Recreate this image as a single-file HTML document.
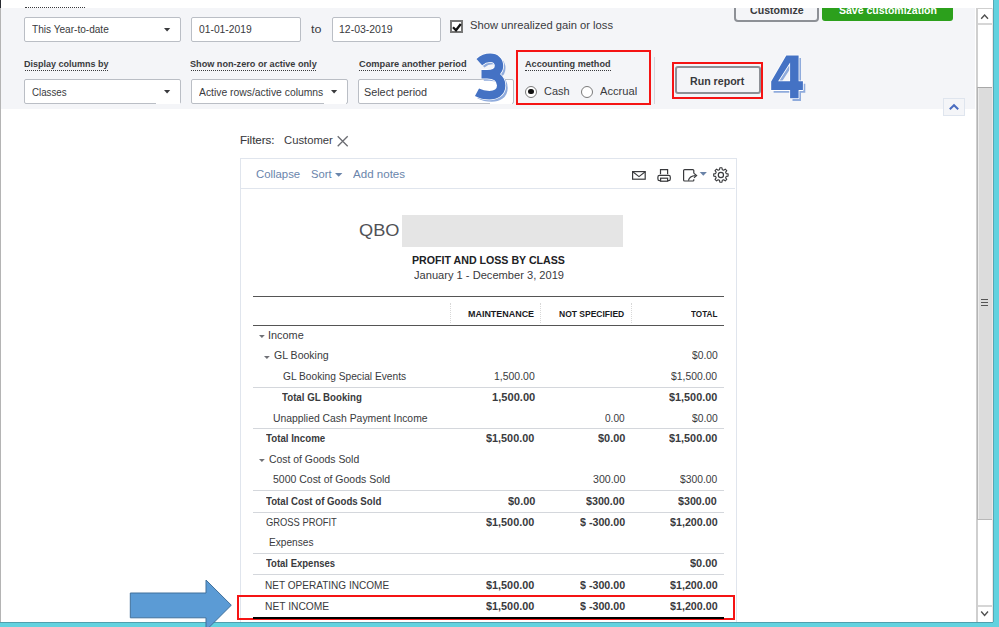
<!DOCTYPE html>
<html><head><meta charset="utf-8"><style>
html,body{margin:0;padding:0;}
body{width:999px;height:627px;overflow:hidden;position:relative;background:#fff;font-family:"Liberation Sans",sans-serif;}
.t{position:absolute;white-space:nowrap;line-height:20px;transform-origin:0 0;font-family:"Liberation Sans",sans-serif;}
.box{position:absolute;box-sizing:content-box;}
.inp{border:1px solid #babec5;border-radius:2px;background:#fff;}
.tri{position:absolute;width:0;height:0;border-style:solid;border-width:3.4px 3px 0 3px;border-color:#393a3d transparent transparent transparent;}
.tri2{position:absolute;width:0;height:0;border-style:solid;border-width:3.2px 2.9px 0 2.9px;border-color:#6b6c72 transparent transparent transparent;}
.dot{position:absolute;height:0;border-top:1px dotted #393a3d;}
.hl{position:absolute;left:253px;width:471px;height:1px;background:#d4d7dc;}
.vd{position:absolute;top:303px;height:20px;width:0;border-left:1px dotted #d8d8d8;}
</style></head><body>

<div style="position:absolute;left:0;top:0;width:1px;height:627px;background:#b4b4b4"></div>
<div style="position:absolute;left:1px;top:8px;width:974px;height:101px;background:#f4f5f8"></div>
<!-- top buttons -->
<div class="box" style="left:733.5px;top:-6px;width:81.5px;height:23.5px;background:#f4f5f8;border:2px solid #8d9096;border-radius:4px"></div>
<div class="box" style="left:822px;top:-6px;width:131px;height:27px;background:#2ca01c;border-radius:3px"></div>
<!-- row 1 inputs -->
<div class="box inp" style="left:24px;top:17px;width:155px;height:23px"></div>
<svg class="box" style="left:163px;top:27.4px" width="8.2" height="5.4"><path d="M1,1 H7.2 L4.1,4.4 Z" fill="#393a3d"/></svg>
<div class="box inp" style="left:191px;top:17px;width:108px;height:23px"></div>
<div class="box inp" style="left:332px;top:17px;width:107px;height:23px"></div>
<div class="box" style="left:450px;top:20.2px;width:9px;height:8.8px;border:2px solid #767676;background:#fff"></div>
<svg class="box" style="left:450px;top:20px" width="14" height="14" viewBox="0 0 14 14"><path d="M3,7.3 L6,10.3 L10.8,4" fill="none" stroke="#111" stroke-width="2.3"/></svg>
<!-- labels underline -->
<div class="dot" style="left:25px;top:70px;width:83px"></div>
<div class="dot" style="left:191px;top:70px;width:125px"></div>
<div class="dot" style="left:358.5px;top:70px;width:107px"></div>
<div class="dot" style="left:525px;top:70px;width:85.5px"></div>
<!-- row 2 inputs -->
<div class="box inp" style="left:24px;top:79px;width:155px;height:23px"></div>
<svg class="box" style="left:163px;top:89px" width="8.2" height="5.4"><path d="M1,1 H7.2 L4.1,4.4 Z" fill="#393a3d"/></svg>
<div style="position:absolute;left:156px;top:101px;width:23.5px;height:3px;background:#fff"></div>
<div class="box inp" style="left:191px;top:79px;width:155px;height:23px"></div>
<svg class="box" style="left:330px;top:89px" width="8.2" height="5.4"><path d="M1,1 H7.2 L4.1,4.4 Z" fill="#393a3d"/></svg>
<div style="position:absolute;left:323.5px;top:101px;width:22.5px;height:3px;background:#fff"></div>
<div class="box inp" style="left:358px;top:79px;width:154px;height:23px"></div>
<div style="position:absolute;left:490px;top:101px;width:21.5px;height:3px;background:#fff"></div>
<svg class="box" style="left:460px;top:45px" width="60" height="65" viewBox="460 45 60 65">
 <g fill="none" stroke-linejoin="round">
 <path id="p3" d="M479.3,62.2 C482.6,59.2 486,57.8 490.2,57.8 C495.6,57.8 499,61 499,65.8 C499,71.2 494.6,74.3 487,74.3 H481.5 M487,74.3 C495.6,74.3 501.2,78.6 501.2,85.6 C501.2,92.6 495.6,95.2 489.4,95.2 C485,95.2 481,94.4 477,92.2" stroke="#8fabdc" stroke-width="8.4" transform="translate(2.3,2.3)"/>
 <path d="M479.3,62.2 C482.6,59.2 486,57.8 490.2,57.8 C495.6,57.8 499,61 499,65.8 C499,71.2 494.6,74.3 487,74.3 H481.5 M487,74.3 C495.6,74.3 501.2,78.6 501.2,85.6 C501.2,92.6 495.6,95.2 489.4,95.2 C485,95.2 481,94.4 477,92.2" stroke="#fff" stroke-width="10"/>
 <path d="M479.3,62.2 C482.6,59.2 486,57.8 490.2,57.8 C495.6,57.8 499,61 499,65.8 C499,71.2 494.6,74.3 487,74.3 H481.5 M487,74.3 C495.6,74.3 501.2,78.6 501.2,85.6 C501.2,92.6 495.6,95.2 489.4,95.2 C485,95.2 481,94.4 477,92.2" stroke="#4472c4" stroke-width="8.4"/>
 </g>
</svg>
<svg class="box" style="left:760px;top:45px" width="55" height="65" viewBox="760 45 55 65">
 <path d="M786.3,55.5 H798.6 V81.2 H802.9 V90.1 H798.6 V98.3 H790.1 V90.1 H771.2 V81.6 Z M790.1,62.6 L778.1,81.2 H790.1 Z" fill="#8fabdc" fill-rule="evenodd" transform="translate(2.4,2.6)"/>
 <path d="M786.3,55.5 H798.6 V81.2 H802.9 V90.1 H798.6 V98.3 H790.1 V90.1 H771.2 V81.6 Z M790.1,62.6 L778.1,81.2 H790.1 Z" fill="#4472c4" fill-rule="evenodd" stroke="#fff" stroke-width="1.6" stroke-linejoin="round"/>
 <path d="M786.3,55.5 H798.6 V81.2 H802.9 V90.1 H798.6 V98.3 H790.1 V90.1 H771.2 V81.6 Z M790.1,62.6 L778.1,81.2 H790.1 Z" fill="#4472c4" fill-rule="evenodd"/>
</svg>
<!-- accounting method -->
<div class="box" style="left:515.6px;top:50.2px;width:131.8px;height:51px;border:2px solid #f51414"></div>
<div class="box" style="left:525px;top:85.6px;width:10px;height:10px;border:1px solid #7a7a7a;border-radius:50%;background:#fff"></div>
<div class="box" style="left:528.4px;top:89px;width:5.4px;height:5.4px;border-radius:50%;background:#111"></div>
<div class="box" style="left:581px;top:85.6px;width:10px;height:10px;border:1px solid #7a7a7a;border-radius:50%;background:#fff"></div>
<div style="position:absolute;left:654.3px;top:57px;width:1px;height:47px;background:#d4d7dc"></div>
<!-- run report -->
<div class="box" style="left:671.9px;top:61.6px;width:87.6px;height:33.1px;border:2px solid #f51414"></div>
<div class="box" style="left:675px;top:66.4px;width:81.7px;height:23.6px;border:2px solid #8d9096;border-radius:3px;background:#f4f5f8"></div>
<!-- collapse chevron -->
<div class="box" style="left:943.3px;top:98.2px;width:19.4px;height:15.4px;border:1px solid #dfe5ee;background:#f4f5f8"></div>
<svg class="box" style="left:943px;top:98px" width="22" height="18"><path d="M6.8,11.2 L11,7.2 L15.2,11.2" fill="none" stroke="#4a6cc0" stroke-width="2"/></svg>
<!-- scrollbar -->
<div style="position:absolute;left:976px;top:8px;width:17px;height:614px;background:#fff"></div>
<div style="position:absolute;left:976.3px;top:8px;width:1.4px;height:614px;background:#cfcfcf"></div>
<div style="position:absolute;left:976px;top:8px;width:17px;height:1px;background:#cfcfcf"></div>
<div style="position:absolute;left:977.5px;top:23.4px;width:15.5px;height:1.5px;background:#d6d6d6"></div>
<div style="position:absolute;left:976.5px;top:87px;width:16px;height:433px;background:#dcdcdc;border-top:1px solid #a8a8a8;border-bottom:1.5px solid #b8b8b8;border-left:1.5px solid #b4b4b4;box-sizing:border-box;box-shadow:inset 1px 0 0 #ebebeb,inset -1px 0 0 #e6e6e6"></div>
<div style="position:absolute;left:977.5px;top:605.2px;width:15.5px;height:1.5px;background:#d6d6d6"></div>
<svg class="box" style="left:976px;top:8px" width="17" height="16"><path d="M5.2,10.8 L8.6,7 L12,10.8" fill="none" stroke="#505050" stroke-width="1.4"/></svg>
<svg class="box" style="left:976px;top:606px" width="17" height="16"><path d="M5.2,5.5 L8.6,9.4 L12,5.5" fill="none" stroke="#505050" stroke-width="1.4"/></svg>
<div style="position:absolute;left:981.3px;top:299.2px;width:7px;height:1.3px;background:#555;box-shadow:0 3px 0 #555,0 6px 0 #555"></div>
<!-- filters -->
<svg class="box" style="left:336px;top:135px" width="14" height="13"><path d="M1.7,1.2 L11.7,11.2 M11.7,1.2 L1.7,11.2" fill="none" stroke="#6b6c72" stroke-width="1.3"/></svg>
<!-- report container -->
<div class="box" style="left:240.4px;top:158.3px;width:494.6px;height:480px;border:1px solid #e0e5ed;background:#fff"></div>
<div style="position:absolute;left:241px;top:187.5px;width:494px;height:1px;background:#e0e5ed"></div>
<svg class="box" style="left:334px;top:171.8px" width="10" height="7"><path d="M1,1 H8.4 L4.7,4.8 Z" fill="#6a85ab"/></svg>
<svg class="box" style="left:620px;top:160px" width="120" height="28" viewBox="620 160 120 28">
 <rect x="632.6" y="171.6" width="12.6" height="7.6" fill="none" stroke="#393a3d" stroke-width="1.2"/>
 <path d="M632.8,171.8 L639,176.6 L645.2,171.8" fill="none" stroke="#393a3d" stroke-width="1.1"/>
 <path d="M660.5,174.2 V169.6 H667.6 V174.2" fill="none" stroke="#393a3d" stroke-width="1.2"/>
 <rect x="657.9" y="175.3" width="12.4" height="5.4" rx="1.6" fill="none" stroke="#393a3d" stroke-width="1.2"/>
 <rect x="660.6" y="178.2" width="7" height="3" fill="#fff" stroke="#393a3d" stroke-width="1.2"/>
 <path d="M693.8,173.4 V170.6 Q693.8,169.6 692.8,169.6 H684.6 Q683.6,169.6 683.6,170.6 V180 Q683.6,181 684.6,181 H693 Q693.8,181 693.8,180.2 V179.2" fill="none" stroke="#393a3d" stroke-width="1.2"/>
 <path d="M688.4,180.6 Q689.4,175.8 695.6,175.6" fill="none" stroke="#393a3d" stroke-width="1.2"/>
 <path d="M694,173.4 L696.6,175.6 L694,177.8" fill="none" stroke="#393a3d" stroke-width="1.2"/>
 <path d="M699.7,172 H706.9 L703.3,175.8 Z" fill="#6a83a8"/>
 <path d="M719.53,169.67 L719.81,167.78 L721.99,167.78 L722.27,169.67 L723.70,170.27 L725.24,169.13 L726.77,170.66 L725.63,172.20 L726.23,173.63 L728.12,173.91 L728.12,176.09 L726.23,176.37 L725.63,177.80 L726.77,179.34 L725.24,180.87 L723.70,179.73 L722.27,180.33 L721.99,182.22 L719.81,182.22 L719.53,180.33 L718.10,179.73 L716.56,180.87 L715.03,179.34 L716.17,177.80 L715.57,176.37 L713.68,176.09 L713.68,173.91 L715.57,173.63 L716.17,172.20 L715.03,170.66 L716.56,169.13 L718.10,170.27 Z" fill="none" stroke="#393a3d" stroke-width="1.1" stroke-linejoin="round"/>
 <circle cx="720.9" cy="175" r="2.6" fill="none" stroke="#393a3d" stroke-width="1.2"/>
</svg>
<div style="position:absolute;left:402.2px;top:215px;width:220.7px;height:32px;background:#e5e5e5"></div>
<!-- table lines -->
<div class="hl" style="top:296px;background:#555;"></div>
<div class="hl" style="top:325px;background:#555;"></div>
<div class="vd" style="left:449.6px"></div>
<div class="vd" style="left:540.2px"></div>
<div class="vd" style="left:631px"></div>
<div class="hl" style="top:387px"></div>
<div class="hl" style="top:427.5px"></div>
<div class="hl" style="top:490px"></div>
<div class="hl" style="top:512px"></div>
<div class="hl" style="top:552.6px"></div>
<div class="hl" style="top:573.8px"></div>
<div class="hl" style="top:595px"></div>
<svg class="box" style="left:257.9px;top:334px" width="7.8" height="5.1"><path d="M1,1 H6.8 L3.9,4.1 Z" fill="#707176"/></svg>
<svg class="box" style="left:262.9px;top:354.6px" width="7.8" height="5.1"><path d="M1,1 H6.8 L3.9,4.1 Z" fill="#707176"/></svg>
<svg class="box" style="left:257.9px;top:458px" width="7.8" height="5.1"><path d="M1,1 H6.8 L3.9,4.1 Z" fill="#707176"/></svg>
<!-- red box net income -->
<div class="box" style="left:237px;top:595px;width:494.3px;height:20.5px;border:2px solid #f51414"></div>
<div class="hl" style="top:617px;height:2px;background:#000"></div>
<div class="t" style="left:750.00px;top:0.50px;font-size:10px;font-weight:700;color:#393a3d;transform:scaleX(1.0600);">Customize</div>
<div class="t" style="left:838.80px;top:0.50px;font-size:10px;font-weight:700;color:#ffffff;transform:scaleX(1.0484);">Save customization</div>
<div class="t" style="left:32.00px;top:20.00px;font-size:10px;font-weight:400;color:#393a3d;transform:scaleX(1.0079);">This Year-to-date</div>
<div class="t" style="left:199.00px;top:20.00px;font-size:10px;font-weight:400;color:#393a3d;transform:scaleX(1.0294);">01-01-2019</div>
<div class="t" style="left:311.00px;top:20.00px;font-size:10px;font-weight:400;color:#393a3d;transform:scaleX(1.2500);">to</div>
<div class="t" style="left:338.75px;top:20.00px;font-size:10px;font-weight:400;color:#393a3d;transform:scaleX(1.0480);">12-03-2019</div>
<div class="t" style="left:470.41px;top:15.40px;font-size:11.3px;font-weight:400;color:#393a3d;transform:scaleX(0.9902);">Show unrealized gain or loss</div>
<div class="t" style="left:24.06px;top:54.30px;font-size:9.6px;font-weight:700;color:#393a3d;transform:scaleX(0.9371);">Display columns by</div>
<div class="t" style="left:190.05px;top:54.30px;font-size:9.6px;font-weight:700;color:#393a3d;transform:scaleX(0.9508);">Show non-zero or active only</div>
<div class="t" style="left:358.50px;top:54.30px;font-size:9.6px;font-weight:700;color:#393a3d;transform:scaleX(0.9658);">Compare another period</div>
<div class="t" style="left:525.00px;top:54.30px;font-size:9.6px;font-weight:700;color:#393a3d;transform:scaleX(0.9500);">Accounting method</div>
<div class="t" style="left:32.00px;top:82.60px;font-size:10px;font-weight:400;color:#393a3d;transform:scaleX(0.9714);">Classes</div>
<div class="t" style="left:199.00px;top:82.60px;font-size:10px;font-weight:400;color:#393a3d;transform:scaleX(1.0350);">Active rows/active columns</div>
<div class="t" style="left:364.22px;top:82.60px;font-size:10px;font-weight:400;color:#393a3d;transform:scaleX(1.0807);">Select period</div>
<div class="t" style="left:544.01px;top:80.80px;font-size:11px;font-weight:400;color:#393a3d;transform:scaleX(0.9917);">Cash</div>
<div class="t" style="left:599.50px;top:80.80px;font-size:11px;font-weight:400;color:#393a3d;transform:scaleX(1.0139);">Accrual</div>
<div class="t" style="left:690.06px;top:71.00px;font-size:11.3px;font-weight:700;color:#393a3d;transform:scaleX(0.9404);">Run report</div>
<div class="t" style="left:240.25px;top:129.80px;font-size:11px;font-weight:400;color:#393a3d;transform:scaleX(1.0452);-webkit-text-stroke:0.12px #393a3d;">Filters:</div>
<div class="t" style="left:284.08px;top:129.90px;font-size:11px;font-weight:400;color:#393a3d;transform:scaleX(1.0234);">Customer</div>
<div class="t" style="left:256.47px;top:164.20px;font-size:11px;font-weight:400;color:#6a85ab;transform:scaleX(1.0310);">Collapse</div>
<div class="t" style="left:311.08px;top:164.20px;font-size:11px;font-weight:400;color:#6a85ab;transform:scaleX(1.0158);">Sort</div>
<div class="t" style="left:352.50px;top:164.20px;font-size:11px;font-weight:400;color:#6a85ab;transform:scaleX(1.0510);">Add notes</div>
<div class="t" style="left:358.54px;top:220.30px;font-size:17.2px;font-weight:400;color:#505156;transform:scaleX(1.0583);">QBO</div>
<div class="t" style="left:412.02px;top:249.60px;font-size:10.8px;font-weight:700;color:#202124;transform:scaleX(0.9844);">PROFIT AND LOSS BY CLASS</div>
<div class="t" style="left:414.00px;top:265.20px;font-size:11.5px;font-weight:400;color:#393a3d;transform:scaleX(0.9658);">January 1 - December 3, 2019</div>
<div class="t" style="left:468.11px;top:303.60px;font-size:9px;font-weight:700;color:#1a1b1e;transform:scaleX(0.9938);">MAINTENANCE</div>
<div class="t" style="left:558.55px;top:303.60px;font-size:9px;font-weight:700;color:#1a1b1e;transform:scaleX(0.9456);">NOT SPECIFIED</div>
<div class="t" style="left:690.70px;top:303.60px;font-size:9px;font-weight:700;color:#1a1b1e;transform:scaleX(0.9034);">TOTAL</div>
<div class="t" style="left:268.03px;top:325.80px;font-size:10.2px;font-weight:400;color:#393a3d;transform:scaleX(1.0687);">Income</div>
<div class="t" style="left:274.00px;top:346.40px;font-size:10.2px;font-weight:400;color:#393a3d;transform:scaleX(1.0346);">GL Booking</div>
<div class="t" style="left:691.70px;top:346.40px;font-size:10.2px;font-weight:400;color:#393a3d;transform:scaleX(1.0120);">$0.00</div>
<div class="t" style="left:283.00px;top:366.80px;font-size:10.2px;font-weight:400;color:#393a3d;">GL Booking Special Events</div>
<div class="t" style="left:494.27px;top:366.80px;font-size:10.2px;font-weight:400;color:#393a3d;transform:scaleX(1.0263);">1,500.00</div>
<div class="t" style="left:671.20px;top:366.80px;font-size:10.2px;font-weight:400;color:#393a3d;transform:scaleX(1.0178);">$1,500.00</div>
<div class="t" style="left:281.75px;top:387.90px;font-size:10.2px;font-weight:700;color:#393a3d;transform:scaleX(0.9518);">Total GL Booking</div>
<div class="t" style="left:491.71px;top:387.90px;font-size:10.2px;font-weight:700;color:#393a3d;transform:scaleX(1.0921);">1,500.00</div>
<div class="t" style="left:669.10px;top:387.90px;font-size:10.2px;font-weight:700;color:#393a3d;transform:scaleX(1.0644);">$1,500.00</div>
<div class="t" style="left:273.23px;top:408.90px;font-size:10.2px;font-weight:400;color:#393a3d;transform:scaleX(1.0183);">Unapplied Cash Payment Income</div>
<div class="t" style="left:605.10px;top:408.90px;font-size:10.2px;font-weight:400;color:#393a3d;transform:scaleX(0.9900);">0.00</div>
<div class="t" style="left:691.70px;top:408.90px;font-size:10.2px;font-weight:400;color:#393a3d;transform:scaleX(1.0120);">$0.00</div>
<div class="t" style="left:265.90px;top:429.40px;font-size:10.2px;font-weight:700;color:#393a3d;transform:scaleX(0.9532);">Total Income</div>
<div class="t" style="left:486.40px;top:429.40px;font-size:10.2px;font-weight:700;color:#393a3d;transform:scaleX(1.0644);">$1,500.00</div>
<div class="t" style="left:598.10px;top:429.40px;font-size:10.2px;font-weight:700;color:#393a3d;transform:scaleX(1.0720);">$0.00</div>
<div class="t" style="left:669.10px;top:429.40px;font-size:10.2px;font-weight:700;color:#393a3d;transform:scaleX(1.0644);">$1,500.00</div>
<div class="t" style="left:268.90px;top:449.90px;font-size:10.2px;font-weight:400;color:#393a3d;transform:scaleX(1.0210);">Cost of Goods Sold</div>
<div class="t" style="left:273.22px;top:470.40px;font-size:10.2px;font-weight:400;color:#393a3d;transform:scaleX(1.0290);">5000 Cost of Goods Sold</div>
<div class="t" style="left:592.66px;top:470.40px;font-size:10.2px;font-weight:400;color:#393a3d;transform:scaleX(1.0400);">300.00</div>
<div class="t" style="left:679.60px;top:470.40px;font-size:10.2px;font-weight:400;color:#393a3d;transform:scaleX(1.0108);">$300.00</div>
<div class="t" style="left:265.90px;top:491.80px;font-size:10.2px;font-weight:700;color:#393a3d;transform:scaleX(0.9492);">Total Cost of Goods Sold</div>
<div class="t" style="left:507.50px;top:491.80px;font-size:10.2px;font-weight:700;color:#393a3d;transform:scaleX(1.0720);">$0.00</div>
<div class="t" style="left:586.00px;top:491.80px;font-size:10.2px;font-weight:700;color:#393a3d;transform:scaleX(1.0514);">$300.00</div>
<div class="t" style="left:678.10px;top:491.80px;font-size:10.2px;font-weight:700;color:#393a3d;transform:scaleX(1.0514);">$300.00</div>
<div class="t" style="left:265.90px;top:513.00px;font-size:10.2px;font-weight:400;color:#393a3d;transform:scaleX(0.9201);">GROSS PROFIT</div>
<div class="t" style="left:486.40px;top:513.00px;font-size:10.2px;font-weight:700;color:#393a3d;transform:scaleX(1.0644);">$1,500.00</div>
<div class="t" style="left:579.80px;top:513.00px;font-size:10.2px;font-weight:700;color:#393a3d;transform:scaleX(1.0488);">$ -300.00</div>
<div class="t" style="left:669.70px;top:513.00px;font-size:10.2px;font-weight:700;color:#393a3d;transform:scaleX(1.0511);">$1,200.00</div>
<div class="t" style="left:268.51px;top:533.30px;font-size:10.2px;font-weight:400;color:#393a3d;transform:scaleX(0.9943);">Expenses</div>
<div class="t" style="left:265.90px;top:554.20px;font-size:10.2px;font-weight:700;color:#393a3d;transform:scaleX(0.9338);">Total Expenses</div>
<div class="t" style="left:690.20px;top:554.20px;font-size:10.2px;font-weight:700;color:#393a3d;transform:scaleX(1.0720);">$0.00</div>
<div class="t" style="left:264.91px;top:575.50px;font-size:10.2px;font-weight:400;color:#393a3d;transform:scaleX(0.9867);">NET OPERATING INCOME</div>
<div class="t" style="left:486.40px;top:575.50px;font-size:10.2px;font-weight:700;color:#393a3d;transform:scaleX(1.0644);">$1,500.00</div>
<div class="t" style="left:579.80px;top:575.50px;font-size:10.2px;font-weight:700;color:#393a3d;transform:scaleX(1.0488);">$ -300.00</div>
<div class="t" style="left:669.70px;top:575.50px;font-size:10.2px;font-weight:700;color:#393a3d;transform:scaleX(1.0511);">$1,200.00</div>
<div class="t" style="left:264.89px;top:597.30px;font-size:10.2px;font-weight:400;color:#393a3d;transform:scaleX(1.0056);">NET INCOME</div>
<div class="t" style="left:486.40px;top:597.30px;font-size:10.2px;font-weight:700;color:#393a3d;transform:scaleX(1.0644);">$1,500.00</div>
<div class="t" style="left:579.80px;top:597.30px;font-size:10.2px;font-weight:700;color:#393a3d;transform:scaleX(1.0488);">$ -300.00</div>
<div class="t" style="left:669.70px;top:597.30px;font-size:10.2px;font-weight:700;color:#393a3d;transform:scaleX(1.0511);">$1,200.00</div>
<div style="position:absolute;left:1px;top:0;width:992px;height:8px;background:#fff"></div>
<div style="position:absolute;left:25px;top:7px;width:60px;height:0;border-top:1px dotted #393a3d"></div>
<div style="position:absolute;left:0;top:0;width:1px;height:8px;background:#272a30"></div>
<!-- frame teal -->
<div style="position:absolute;left:993px;top:0;width:6px;height:627px;background:#62d2df"></div>
<div style="position:absolute;left:992px;top:8px;width:1px;height:614px;background:#eee6e6"></div>
<div style="position:absolute;left:993px;top:0;width:1px;height:622px;background:#56a8b5"></div>
<div style="position:absolute;left:0;top:622px;width:999px;height:5px;background:#62d2df"></div>
<div style="position:absolute;left:0;top:621.5px;width:993px;height:1px;background:#4f9fad"></div>
<!-- blue arrow -->
<svg class="box" style="left:120px;top:570px" width="130" height="70" viewBox="120 570 130 70">
 <path d="M130.3,593 H206 V580 L231.3,605.2 L206,630.4 V617.8 H130.3 Z" fill="#5b9bd5" stroke="#41719c" stroke-width="1"/>
</svg>

</body></html>
